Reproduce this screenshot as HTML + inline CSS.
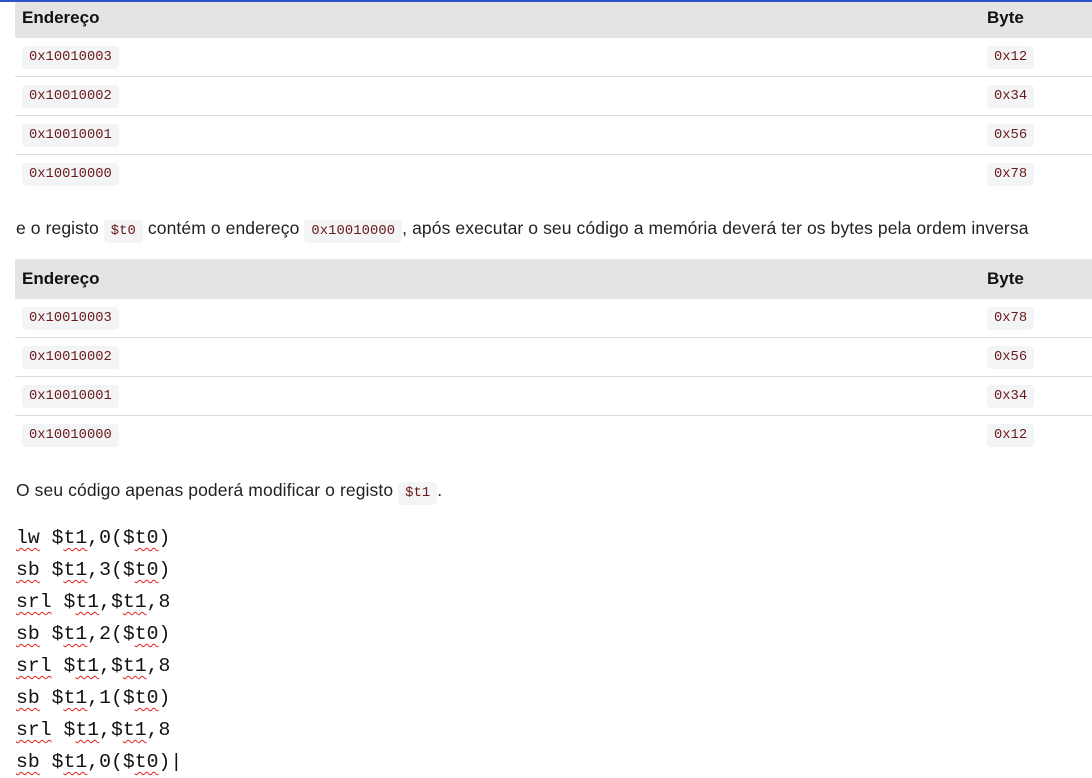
<!DOCTYPE html>
<html><head><style>
body{margin:0;width:1092px;height:773px;background:#fff;font-family:"Liberation Sans",sans-serif;color:#222;overflow:hidden;position:relative}
.bar{position:absolute;left:0;top:0;width:1092px;height:2px;background:#2a55c8;z-index:5}
table{position:absolute;left:15px;width:1077px;border-collapse:collapse}
th{background:#e4e4e4;text-align:left;font-weight:bold;font-size:17px;height:40px;padding:0 0 0 7px;color:#111}
td{height:38px;border-bottom:1px solid #ddd;padding:0 0 0 7px}
.c{display:inline-block;background:#f3f4f5;color:#6b1a1a;font-family:"Liberation Mono",monospace;font-size:13.8px;padding:4px 7px;border-radius:4px}
.b{width:105px}
p{position:absolute;left:16px;margin:0;font-size:17.5px;white-space:nowrap;letter-spacing:0.1px}
pre{position:absolute;left:16px;top:522px;margin:0;font-family:"Liberation Mono",monospace;font-size:19.8px;line-height:32px;color:#111}
u{text-decoration:underline wavy #d22;text-underline-offset:4px;text-decoration-thickness:1px}
</style></head><body>
<div class="bar"></div>
<table style="top:-2px">
<tr><th>Endereço</th><th class="b">Byte</th></tr>
<tr><td><span class="c">0x10010003</span></td><td><span class="c">0x12</span></td></tr>
<tr><td><span class="c">0x10010002</span></td><td><span class="c">0x34</span></td></tr>
<tr><td><span class="c">0x10010001</span></td><td><span class="c">0x56</span></td></tr>
<tr><td style="border:none"><span class="c">0x10010000</span></td><td style="border:none"><span class="c">0x78</span></td></tr>
</table>
<p style="top:218px">e o registo <span class="c">$t0</span> contém o endereço <span class="c">0x10010000</span>, após executar o seu código a memória deverá ter os bytes pela ordem inversa</p>
<table style="top:259px">
<tr><th>Endereço</th><th class="b">Byte</th></tr>
<tr><td><span class="c">0x10010003</span></td><td><span class="c">0x78</span></td></tr>
<tr><td><span class="c">0x10010002</span></td><td><span class="c">0x56</span></td></tr>
<tr><td><span class="c">0x10010001</span></td><td><span class="c">0x34</span></td></tr>
<tr><td style="border:none"><span class="c">0x10010000</span></td><td style="border:none"><span class="c">0x12</span></td></tr>
</table>
<p style="top:480px">O seu código apenas poderá modificar o registo <span class="c">$t1</span>.</p>
<pre><u>lw</u> $<u>t1</u>,0($<u>t0</u>)
<u>sb</u> $<u>t1</u>,3($<u>t0</u>)
<u>srl</u> $<u>t1</u>,$<u>t1</u>,8
<u>sb</u> $<u>t1</u>,2($<u>t0</u>)
<u>srl</u> $<u>t1</u>,$<u>t1</u>,8
<u>sb</u> $<u>t1</u>,1($<u>t0</u>)
<u>srl</u> $<u>t1</u>,$<u>t1</u>,8
<u>sb</u> $<u>t1</u>,0($<u>t0</u>)|</pre>
</body></html>
